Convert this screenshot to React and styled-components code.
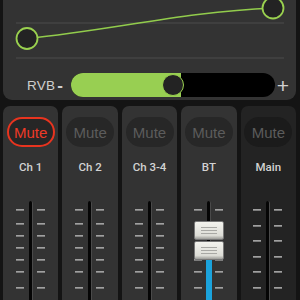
import React from 'react'
import styled, { createGlobalStyle } from 'styled-components'

const Global = createGlobalStyle`
  body {
    margin: 0;
    background: #141414;
    font-family: "Liberation Sans", Arial, sans-serif;
  }
`

const Screen = styled.div`
  width: 300px;
  height: 300px;
  overflow: hidden;
  display: flex;
  flex-direction: column;
  background: #141414;
`

const TopPanel = styled.div`
  height: 100px;
  margin: 0 4px 0 3px;
  background: #333;
  border-radius: 0 0 9px 9px;
  display: flex;
  flex-direction: column;
`

const Graph = styled.svg`
  display: block;
  width: 293px;
  height: 66px;
`

const RvbRow = styled.div`
  display: flex;
  align-items: center;
  height: 24px;
  margin-top: 7px;
  padding-left: 24px;
`

const RvbLabel = styled.span`
  font-size: 13.5px;
  color: #cfcfcf;
  letter-spacing: 0.2px;
`

const Sign = styled.span`
  color: #d0d0d0;
  font-size: ${p => (p.$plus ? '21px' : '17px')};
  font-weight: ${p => (p.$plus ? 300 : 700)};
  margin-left: 2px;
  line-height: 1;
`

const Track = styled.div`
  position: relative;
  width: 204px;
  height: 24px;
  margin-left: 8px;
  background: #000;
  border-radius: 12px;
`

const Fill = styled.div`
  height: 100%;
  background: #98cf52;
  border-radius: 12px 0 0 12px;
`

const Knob = styled.div`
  position: absolute;
  top: 1px;
  width: 20px;
  height: 20px;
  margin-left: -11px;
  border-radius: 50%;
  background: #232323;
  border: 1.5px solid #9ad14f;
`

const Strips = styled.div`
  flex: 1;
  display: flex;
  gap: 4px;
  margin: 6px 4px 0 3px;
`

const Strip = styled.div`
  flex: 1;
  display: flex;
  flex-direction: column;
  align-items: center;
  padding-top: 11px;
  border-radius: 7px 7px 0 0;
  background: ${p => (p.$dark ? '#232323' : '#333')};
`

const Mute = styled.div`
  box-sizing: border-box;
  width: 48px;
  height: 30px;
  border-radius: 15px;
  display: flex;
  align-items: center;
  justify-content: center;
  font-size: 15px;
  color: ${p => (p.$on ? '#ee3a26' : '#5c5c5c')};
  background: ${p => (p.$on ? '#262626' : p.$dark ? '#1b1b1b' : '#272727')};
  border: 2px solid ${p => (p.$on ? '#e8341f' : 'transparent')};
`

const Label = styled.div`
  margin-top: 14px;
  font-family: Roboto, "Liberation Sans", sans-serif;
  font-size: 11.5px;
  font-weight: 500;
  color: #d2d2d2;
  line-height: 13px;
`

const Fader = styled.div`
  position: relative;
  align-self: stretch;
  flex: 1;
  margin-top: 27px;
`

const Groove = styled.div`
  position: absolute;
  top: 0;
  bottom: 0;
  left: calc(50% - 2px);
  width: 3px;
  background: #050505;
  border-right: 1px solid #4a4a4a;
  border-radius: 2px 2px 0 0;
`

const Tick = styled.div`
  position: absolute;
  top: ${p => p.$top}px;
  left: calc(50% + ${p => (p.$right ? 6 : -15)}px);
  width: 8px;
  height: 2px;
  background: #7c7c7c;
  border-top: 1px solid #a0a0a0;
  box-sizing: border-box;
`

const Level = styled.div`
  position: absolute;
  top: ${p => p.$top}px;
  bottom: 0;
  left: calc(50% - 3px);
  width: 6px;
  background: #1ba3dc;
`

const Cap = styled.div`
  position: absolute;
  top: ${p => p.$top}px;
  left: calc(50% - 15px);
  box-sizing: border-box;
  width: 30px;
  height: 19px;
  border-radius: 2px;
  background: linear-gradient(#f4f4ee, #dcdcd6 80%, #9c9c98);
  border: 1px solid #777;
  display: flex;
  flex-direction: column;
  align-items: center;
  justify-content: center;
  gap: 2px;
`

const CapLine = styled.div`
  width: 16px;
  height: 1px;
  background: #a8a8a4;
`

const chTicks = [8, 22, 34, 46, 58, 70, 86]
const mainTicks = [8, 24, 39, 55, 70, 86]

const channels = [
  { name: 'Ch 1', on: true },
  { name: 'Ch 2' },
  { name: 'Ch 3-4' },
  { name: 'BT', knob: true },
  { name: 'Main', dark: true, ticks: mainTicks },
]

function FaderCap({ top }) {
  return (
    <Cap $top={top}>
      <CapLine />
      <CapLine />
      <CapLine />
    </Cap>
  )
}

function Channel({ ch }) {
  const ticks = ch.ticks || chTicks
  return (
    <Strip $dark={ch.dark}>
      <Mute $on={ch.on} $dark={ch.dark}>Mute</Mute>
      <Label>{ch.name}</Label>
      <Fader>
        <Groove />
        {ticks.map(t => (
          <React.Fragment key={t}>
            <Tick $top={t} />
            <Tick $top={t} $right />
          </React.Fragment>
        ))}
        {ch.knob && (
          <>
            <Level $top={58} />
            <FaderCap top={20} />
            <FaderCap top={40} />
          </>
        )}
      </Fader>
    </Strip>
  )
}

export default function App() {
  return (
    <>
      <Global />
      <Screen>
        <TopPanel>
          <Graph viewBox="0 0 293 66">
            <line x1="13" y1="23" x2="281" y2="23" stroke="#4c4c4c" strokeWidth="1" />
            <line x1="13" y1="58" x2="281" y2="58" stroke="#4c4c4c" strokeWidth="1" />
            <path d="M24 38.5 C110 30 180 12 270 8" fill="none" stroke="#92cc4c" strokeWidth="1.6" />
            <circle cx="24" cy="38.5" r="10.5" fill="#232323" stroke="#9ad14f" strokeWidth="1.8" />
            <circle cx="270" cy="8" r="10.5" fill="#232323" stroke="#9ad14f" strokeWidth="1.8" />
          </Graph>
          <RvbRow>
            <RvbLabel>RVB</RvbLabel>
            <Sign>-</Sign>
            <Track>
              <Fill style={{ width: '54%' }} />
              <Knob style={{ left: '50%' }} />
            </Track>
            <Sign $plus>+</Sign>
          </RvbRow>
        </TopPanel>
        <Strips>
          {channels.map(ch => (
            <Channel key={ch.name} ch={ch} />
          ))}
        </Strips>
      </Screen>
    </>
  )
}
